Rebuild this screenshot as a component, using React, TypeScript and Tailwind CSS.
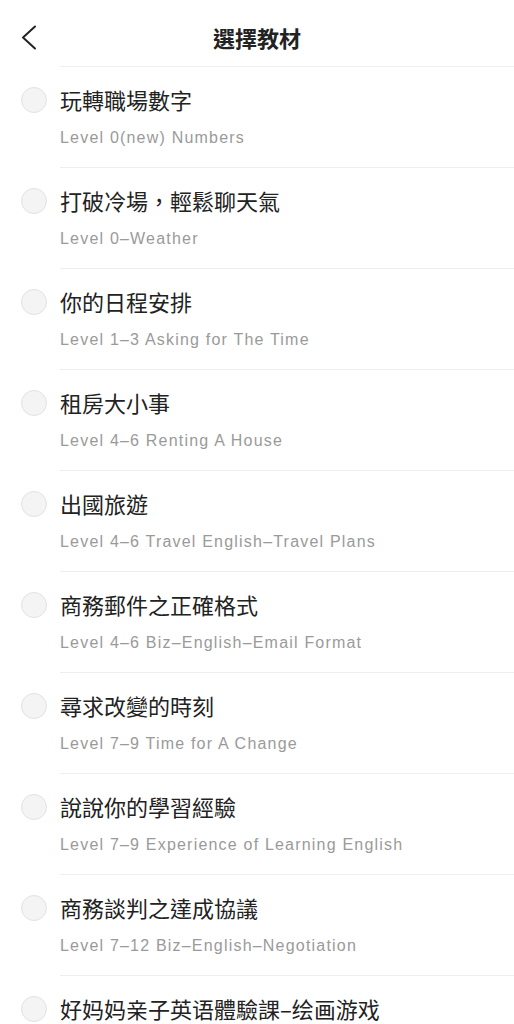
import React from "react";

const items: [string, string | null][] = [
  ["玩轉職場數字", "Level 0(new) Numbers"],
  ["打破冷場，輕鬆聊天氣", "Level 0–Weather"],
  ["你的日程安排", "Level 1–3 Asking for The Time"],
  ["租房大小事", "Level 4–6 Renting A House"],
  ["出國旅遊", "Level 4–6 Travel English–Travel Plans"],
  ["商務郵件之正確格式", "Level 4–6 Biz–English–Email Format"],
  ["尋求改變的時刻", "Level 7–9 Time for A Change"],
  ["說說你的學習經驗", "Level 7–9 Experience of Learning English"],
  ["商務談判之達成協議", "Level 7–12 Biz–English–Negotiation"],
  ["好妈妈亲子英语體驗課–绘画游戏", null],
];

export default function App() {
  return (
    <div
      className="w-[514px] h-[1024px] overflow-hidden bg-white"
      style={{ fontFamily: '"Liberation Sans", "Noto Sans CJK TC", sans-serif' }}
    >
      <div className="relative h-[66px] flex items-center justify-center">
        <svg
          className="absolute left-[20px] top-[25px]"
          width="18"
          height="26"
          viewBox="0 0 18 26"
          fill="none"
        >
          <path d="M15 1.5 L3 12.5 L15 23.5" stroke="#222" strokeWidth="2" strokeLinecap="round" strokeLinejoin="round" />
        </svg>
        <h1
          className="text-[22px] font-bold text-[#222] leading-none mt-[8px]"
          style={{ fontFamily: '"Noto Sans CJK TC", sans-serif' }}
        >
          選擇教材
        </h1>
      </div>
      <div>
        {items.map(([t, s], i) => (
          <div key={i} className="flex">
            <div className="w-[60px] shrink-0 pt-[21px] pl-[21px]">
              <div className="w-[26px] h-[26px] rounded-full border border-[#e2e2e2] bg-[#f4f4f4]" />
            </div>
            <div className="flex-1 border-t border-[#eeeeee] pt-[18px] pb-[18px]">
              <div
                className="text-[22px] leading-[28px] text-[#222]"
                style={{ fontFamily: '"Noto Sans CJK TC", sans-serif' }}
              >
                {t}
              </div>
              {s && (
                <div className="mt-[14px] text-[16px] leading-[22px] text-[#9a9a9a] tracking-[1.2px]">
                  {s}
                </div>
              )}
            </div>
          </div>
        ))}
      </div>
    </div>
  );
}
